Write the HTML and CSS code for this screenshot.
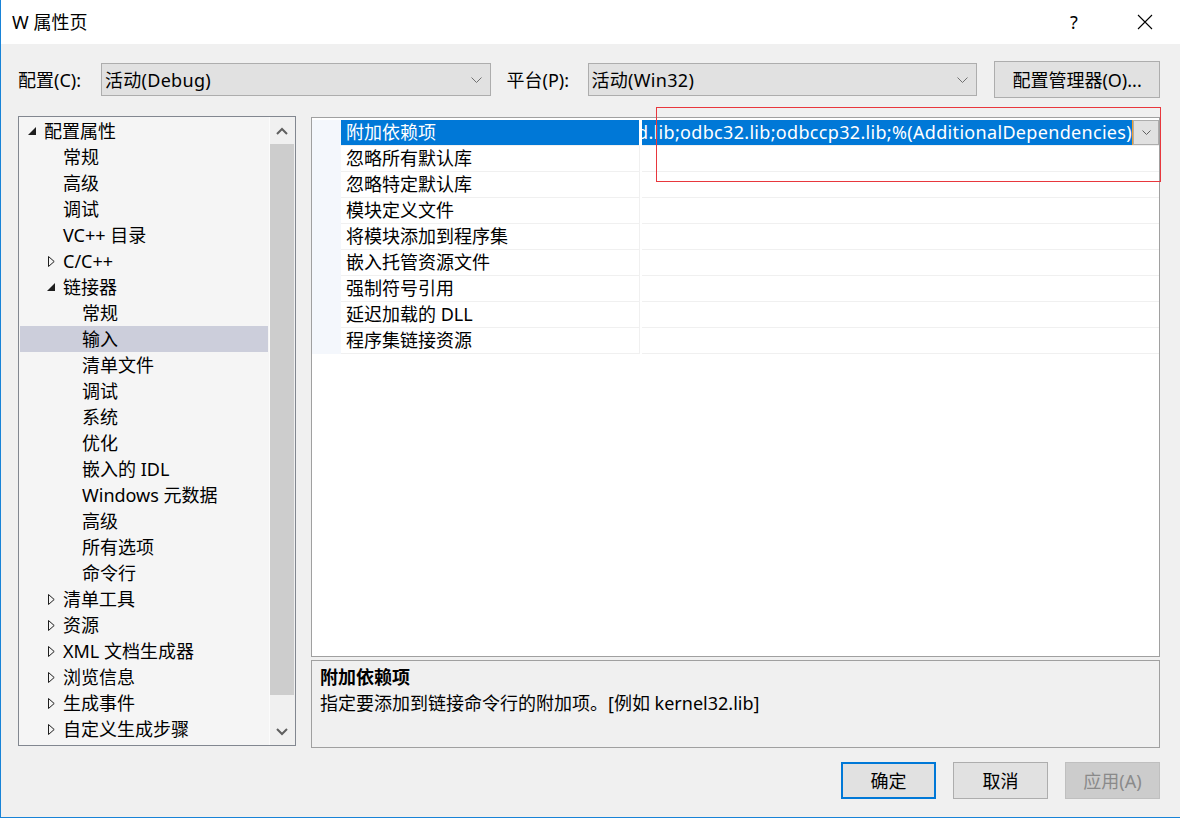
FILE: index.html
```html
<!DOCTYPE html>
<html lang="zh-CN">
<head>
<meta charset="utf-8">
<title>W 属性页</title>
<link rel="stylesheet" href="styles.css">
</head>
<body>
<div class="window">
  <div class="titlebar">
    <span class="title">W 属性页</span>
    <span class="help">?</span>
    <span class="close"><svg width="16" height="16" viewBox="0 0 16 16"><path d="M1 1 L15 15 M15 1 L1 15" stroke="#000" stroke-width="1.1" fill="none"/></svg></span>
  </div>
  <div class="content">
    <div class="config-row">
      <span class="lbl lbl-config">配置(C):</span>
      <div class="combo"><span class="combo-text">活动(Debug)</span><svg class="chev" width="11" height="6" viewBox="0 0 11 6"><polyline points="0.5,0.5 5.5,5.5 10.5,0.5" fill="none" stroke="#707070"/></svg></div>
      <span class="lbl lbl-platform">平台(P):</span>
      <div class="combo"><span class="combo-text">活动(Win32)</span><svg class="chev" width="11" height="6" viewBox="0 0 11 6"><polyline points="0.5,0.5 5.5,5.5 10.5,0.5" fill="none" stroke="#707070"/></svg></div>
      <button class="btn btn-mgr">配置管理器(O)...</button>
    </div>
    <div class="main">
      <div class="tree">
        <div class="tree-list">
          <div class="trow l1"><span class="tg"><svg width="8" height="8" viewBox="0 0 8 8"><polygon points="8,0 8,8 0,8" fill="#1e1e1e"/></svg></span>配置属性</div>
          <div class="trow l2"><span class="tg"></span>常规</div>
          <div class="trow l2"><span class="tg"></span>高级</div>
          <div class="trow l2"><span class="tg"></span>调试</div>
          <div class="trow l2"><span class="tg"></span>VC++ 目录</div>
          <div class="trow l2"><span class="tg"><svg class="col" width="7" height="11" viewBox="0 0 7 11"><polygon points="0.5,0.5 6.2,5.5 0.5,10.5" fill="none" stroke="#1e1e1e"/></svg></span>C/C++</div>
          <div class="trow l2"><span class="tg"><svg class="exp" width="8" height="8" viewBox="0 0 8 8"><polygon points="8,0 8,8 0,8" fill="#1e1e1e"/></svg></span>链接器</div>
          <div class="trow l3"><span class="tg"></span>常规</div>
          <div class="trow l3 sel"><span class="tg"></span>输入</div>
          <div class="trow l3"><span class="tg"></span>清单文件</div>
          <div class="trow l3"><span class="tg"></span>调试</div>
          <div class="trow l3"><span class="tg"></span>系统</div>
          <div class="trow l3"><span class="tg"></span>优化</div>
          <div class="trow l3"><span class="tg"></span>嵌入的 IDL</div>
          <div class="trow l3"><span class="tg"></span>Windows 元数据</div>
          <div class="trow l3"><span class="tg"></span>高级</div>
          <div class="trow l3"><span class="tg"></span>所有选项</div>
          <div class="trow l3"><span class="tg"></span>命令行</div>
          <div class="trow l2"><span class="tg"><svg class="col" width="7" height="11" viewBox="0 0 7 11"><polygon points="0.5,0.5 6.2,5.5 0.5,10.5" fill="none" stroke="#1e1e1e"/></svg></span>清单工具</div>
          <div class="trow l2"><span class="tg"><svg class="col" width="7" height="11" viewBox="0 0 7 11"><polygon points="0.5,0.5 6.2,5.5 0.5,10.5" fill="none" stroke="#1e1e1e"/></svg></span>资源</div>
          <div class="trow l2"><span class="tg"><svg class="col" width="7" height="11" viewBox="0 0 7 11"><polygon points="0.5,0.5 6.2,5.5 0.5,10.5" fill="none" stroke="#1e1e1e"/></svg></span>XML 文档生成器</div>
          <div class="trow l2"><span class="tg"><svg class="col" width="7" height="11" viewBox="0 0 7 11"><polygon points="0.5,0.5 6.2,5.5 0.5,10.5" fill="none" stroke="#1e1e1e"/></svg></span>浏览信息</div>
          <div class="trow l2"><span class="tg"><svg class="col" width="7" height="11" viewBox="0 0 7 11"><polygon points="0.5,0.5 6.2,5.5 0.5,10.5" fill="none" stroke="#1e1e1e"/></svg></span>生成事件</div>
          <div class="trow l2"><span class="tg"><svg class="col" width="7" height="11" viewBox="0 0 7 11"><polygon points="0.5,0.5 6.2,5.5 0.5,10.5" fill="none" stroke="#1e1e1e"/></svg></span>自定义生成步骤</div>
        </div>
        <div class="scrollbar">
          <div class="sb-arrow sb-up"><svg width="12" height="8" viewBox="0 0 12 8"><polyline points="1,7 6,2 11,7" fill="none" stroke="#606060" stroke-width="2"/></svg></div>
          <div class="sb-thumb"></div>
          <div class="sb-track"></div>
          <div class="sb-arrow sb-down"><svg width="12" height="8" viewBox="0 0 12 8"><polyline points="1,1 6,6 11,1" fill="none" stroke="#606060" stroke-width="2"/></svg></div>
        </div>
      </div>
      <div class="right">
        <div class="grid">
          <div class="grow selected">
            <div class="gmargin"></div>
            <div class="gname">附加依赖项</div>
            <div class="gvalue">
              <div class="gval-text"><span>uuid.lib;odbc32.lib;odbccp32.lib;%(AdditionalDependencies)</span></div>
              <div class="gdrop"><svg width="9" height="5" viewBox="0 0 9 5"><polyline points="0.5,0.5 4.5,4.5 8.5,0.5" fill="none" stroke="#606060"/></svg></div>
            </div>
          </div>
          <div class="grow"><div class="gmargin"></div><div class="gname">忽略所有默认库</div><div class="gvalue"></div></div>
          <div class="grow"><div class="gmargin"></div><div class="gname">忽略特定默认库</div><div class="gvalue"></div></div>
          <div class="grow"><div class="gmargin"></div><div class="gname">模块定义文件</div><div class="gvalue"></div></div>
          <div class="grow"><div class="gmargin"></div><div class="gname">将模块添加到程序集</div><div class="gvalue"></div></div>
          <div class="grow"><div class="gmargin"></div><div class="gname">嵌入托管资源文件</div><div class="gvalue"></div></div>
          <div class="grow"><div class="gmargin"></div><div class="gname">强制符号引用</div><div class="gvalue"></div></div>
          <div class="grow"><div class="gmargin"></div><div class="gname">延迟加载的 DLL</div><div class="gvalue"></div></div>
          <div class="grow"><div class="gmargin"></div><div class="gname">程序集链接资源</div><div class="gvalue"></div></div>
        </div>
        <div class="desc">
          <div class="desc-title">附加依赖项</div>
          <div class="desc-text">指定要添加到链接命令行的附加项。[例如 kernel32.lib]</div>
        </div>
      </div>
    </div>
    <div class="footer">
      <button class="btn btn-foot btn-default">确定</button>
      <button class="btn btn-foot">取消</button>
      <button class="btn btn-foot btn-disabled">应用(A)</button>
    </div>
  </div>
  <div class="annot"></div>
</div>
</body>
</html>
```

FILE: styles.css
```css
* { box-sizing: border-box; margin: 0; padding: 0; }
html, body { width: 1180px; height: 818px; overflow: hidden; }
body {
  font-family: "Noto Sans", "Noto Sans CJK SC", sans-serif;
  font-size: 18px;
  color: #000;
  background: #f0f0f0;
}
.window {
  position: relative;
  width: 1180px;
  height: 818px;
  border-left: 1px solid #1883d7;
  border-bottom: 1px solid #1883d7;
  background: #f0f0f0;
  display: flex;
  flex-direction: column;
}
.titlebar {
  height: 44px;
  background: #fff;
  display: flex;
  align-items: center;
  padding-left: 11px;
  padding-right: 12px;
}
.title { flex: 1; line-height: 44px; }
.help { width: 46px; text-align: center; line-height: 44px; margin-right: 25px; }
.close { width: 46px; height: 44px; display: flex; align-items: center; justify-content: center; }

.content { padding: 0 20px 0 17px; display: flex; flex-direction: column; }

.config-row { margin-top: 17px; height: 37px; display: flex; align-items: center; }
.lbl { line-height: 26px; white-space: nowrap; }
.lbl-config { width: 83px; }
.lbl-platform { width: 81px; margin-left: 16px; }
.combo {
  width: 390px; height: 33px;
  background: #e1e1e1;
  border: 1px solid #adadad;
  display: flex; align-items: center;
  padding-left: 3px; padding-right: 8px;
}
.combo-text { flex: 1; line-height: 26px; white-space: nowrap; letter-spacing: 0.3px; }
.chev { flex: none; }
.btn {
  font: inherit;
  color: #000;
  background: #e1e1e1;
  border: 1px solid #adadad;
  line-height: 26px;
  white-space: nowrap;
}
.btn-mgr { margin-left: 17px; width: 166px; height: 37px; }

.main { margin-top: 18px; display: flex; gap: 15px; height: 632px; }
.tree {
  width: 279px; height: 630px;
  border: 1px solid #828790;
  background: #f5f5f5;
  display: flex;
}
.tree-list { flex: 1; padding: 1px 1px 0 1px; overflow: hidden; }
.trow { height: 26px; line-height: 26px; display: flex; align-items: center; white-space: nowrap; }
.trow.l1 { padding-left: 7px; }
.trow.l2 { padding-left: 26px; }
.trow.l3 { padding-left: 45px; }
.trow.sel { background: #cccedb; }
.tg { width: 17px; height: 26px; flex: none; display: flex; align-items: center; }
.tg svg { margin-left: 1px; }
.tg svg.col { margin-left: 2px; }
.scrollbar {
  width: 26px; flex: none;
  background: #f0f0f0;
  border-left: 1px solid #fbfbfb;
  display: flex; flex-direction: column;
  padding-right: 1px;
}
.sb-arrow { display: flex; align-items: center; justify-content: center; flex: none; }
.sb-up { height: 27px; }
.sb-down { height: 26px; }
.sb-thumb { height: 551px; background: #cdcdcd; flex: none; }
.sb-track { flex: 1; }

.right { width: 849px; display: flex; flex-direction: column; padding-top: 1px; }
.grid {
  height: 540px;
  border: 1px solid #a0a0a0;
  background: #fff;
  padding-top: 2px;
}
.grow { height: 26px; display: flex; }
.gmargin { width: 29px; flex: none; background: #f4f7fc; }
.gname {
  width: 299px; flex: none;
  padding-left: 5px;
  line-height: 25px;
  border-right: 1px solid #f0f0f0;
  border-bottom: 1px solid #f0f0f0;
  white-space: nowrap;
}
.gvalue { flex: 1; margin-left: 2px; border-bottom: 1px solid #f0f0f0; display: flex; min-width: 0; }
.grow.selected .gname { background: #0078d7; color: #fff; border-right-color: #fff; }
.gval-text {
  flex: 1; min-width: 0;
  overflow: hidden;
  display: flex; justify-content: flex-end;
  background: #0078d7; color: #fff;
  line-height: 25px; white-space: nowrap;
  letter-spacing: 0.32px;
  border-right: 1px solid #f0a030;
}
.gval-text span { flex: none; }
.gdrop {
  width: 26px; flex: none;
  background: #e1e1e1;
  border: 1px solid #adadad;
  display: flex; align-items: center; justify-content: center;
}

.desc {
  margin-top: 3px;
  height: 88px;
  border: 1px solid #a0a0a0;
  background: #f0f0f0;
  padding: 3px 8px 0 8px;
}
.desc-title { font-weight: bold; line-height: 26px; }
.desc-text { line-height: 26px; white-space: nowrap; }

.footer { margin-top: 14px; display: flex; justify-content: flex-end; gap: 17px; }
.btn-foot { width: 95px; height: 37px; }
.btn-default { border: 2px solid #0078d7; }
.btn-disabled { background: #cccccc; border-color: #bfbfbf; color: #8a8a8a; }

.annot {
  position: absolute;
  left: 655px; top: 107px;
  width: 505px; height: 75px;
  border: 1px solid #e8373d;
  pointer-events: none;
}
```
